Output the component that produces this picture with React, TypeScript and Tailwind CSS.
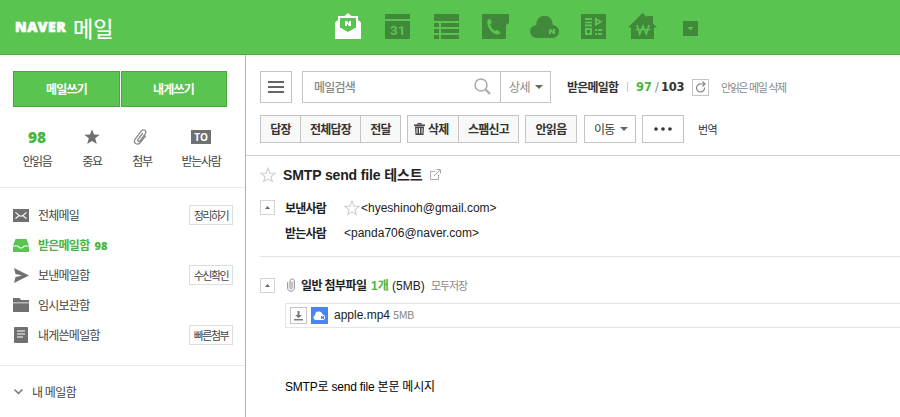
import React from "react";

const KR = "font-['Noto_Sans_CJK_KR',sans-serif]";
const LAT = "font-['Liberation_Sans','Noto_Sans_CJK_KR',sans-serif]";

function HeaderIcons() {
  return (
    <div className="flex items-start fill-[#40893a]">
      <svg width="30" height="30" viewBox="0 0 30 30">
        <path fill="#fff" d="M2 10.500l3-2.500V4h6.500L15 1l3.500 3H25v4l3 2.500V27H2z" />
        <path fill="#5ac451" d="M7 6h16v9.500L15 20l-8-4.500z" />
        <path fill="#fff" d="M12 9h2l2 2.400V9h2v5h-2l-2-2.400V14h-2z" />
      </svg>
      <svg className="ml-5" width="30" height="30" viewBox="0 0 30 30">
        <path d="M2 2h25v5H2zM2 9h25v18H2z" />
        <text x="14.8" y="22.600" textAnchor="middle" fontSize="13.5" fontWeight="700" fill="#5ac451" className="font-['Roboto',sans-serif]">31</text>
      </svg>
      <svg className="ml-[19px]" width="30" height="30" viewBox="0 0 30 30">
        <path d="M2 2h25v7H2zM2 11h5v4H2zM9 11h18v4H9zM2 17h5v4H2zM9 17h18v4H9zM2 23h5v4H2zM9 23h18v4H9z" />
      </svg>
      <svg className="ml-[18px]" width="30" height="30" viewBox="0 0 30 30">
        <path d="M2 2h27v9l-3 2v14H2z" />
        <path fill="#5ac451" d="M7.500 8l2.500-1.200 2 4.200-1.900 1.300c.9 3.200 2.400 5.100 4.900 6.700l2-1.300 3.500 2.800-1.500 1.700c-2.500.8-5.500-.6-8-3.300-3-3.300-4.500-7.500-3.500-10.900z" />
      </svg>
      <svg className="ml-5" width="30" height="30" viewBox="0 0 30 30">
        <circle cx="14.5" cy="12" r="8.200" />
        <rect x="0" y="13" width="29" height="13" rx="6.500" />
        <path fill="#5ac451" d="M19 17h2l2 2.400V17h2v5h-2l-2-2.400V22h-2z" />
      </svg>
      <svg className="ml-[19px]" width="30" height="30" viewBox="0 0 30 30">
        <path d="M2 2h25v25H2z" />
        <path fill="#5ac451" fillRule="evenodd" d="M6 6h7v2H6zM6 9.500h7v1.700H6zM6 12.500h7v2H6zM16 5.500l7.500 4.300-7.500 4.400zM18 8.500v2.700l2.300-1.400zM6 16h7v7H6zm2 2v3h3v-3zM16 17h2v2h-2zM19 17h4v2h-4zM16 21h2v2h-2zM19 21h4v2h-4z" />
      </svg>
      <svg className="ml-[19px]" width="30" height="30" viewBox="0 0 30 30">
        <path d="M0 15.500L14.500 1l4.500 4.500V4h6v7.500l4 4h-3V27H3V15.500z" />
        <path fill="none" stroke="#5ac451" strokeWidth="1.700" d="M9 13l2.700 9L15 14l3.300 8L21 13" />
        <path stroke="#5ac451" strokeWidth="1.200" d="M7.500 17.500h15" />
      </svg>
      <svg className="ml-[25px]" width="15" height="30" viewBox="0 0 15 30">
        <path d="M0 9h15v15H0z" />
        <path fill="#5ac451" d="M4.500 15h6l-3 3.500z" />
      </svg>
    </div>
  );
}

function Paperclip({ className, width, height }: { className: string; width: number; height: number }) {
  return (
    <svg className={className} width={width} height={height} viewBox="0 0 14 16" fill="none" stroke="currentColor" strokeWidth="1.300" strokeLinecap="round">
      <path d="M9.500 4.500L5 10.300c-1 1.500.9 2.800 2 1.500l5.200-7c2-3-1.700-5.300-3.700-2.900L2.300 9.800c-2.700 4 2 7.300 5 3.700L12.500 7" />
    </svg>
  );
}

function StraightClip() {
  return (
    <svg width="8" height="14" viewBox="0 0 8 14" fill="none" stroke="#888" strokeWidth="1">
      <path d="M5 3.500v6.300c0 1.400-2 1.400-2 0V3.200C3 .2 7.300.2 7.300 3.200v7c0 4-6.600 4-6.600 0V4" />
    </svg>
  );
}

function Star({ size }: { size: number }) {
  return (
    <svg width={size} height={size} viewBox="0 0 16 16" fill="none" stroke="#cfcfcf" strokeWidth="1.100">
      <path d="M8 1.200l1.900 4.900 5.200.2-4.100 3.300 1.400 5L8 11.800l-4.400 2.800 1.400-5L.9 6.300l5.200-.2z" />
    </svg>
  );
}

function Toggle() {
  return (
    <div className="flex h-[15px] w-[15px] items-center justify-center border border-[#d2d2d2]">
      <svg width="5" height="3" viewBox="0 0 5 3"><path fill="#666" d="M0 3L2.500 0 5 3z" /></svg>
    </div>
  );
}

function Caret() {
  return <svg width="8" height="4" viewBox="0 0 8 4"><path fill="#666" d="M0 0h8L4 4z" /></svg>;
}

function Shortcut({ width, label, children }: { width: string; label: string; children: React.ReactNode }) {
  return (
    <div className={`flex shrink-0 flex-col items-center ${width}`}>
      <div className="flex h-5 items-center">{children}</div>
      <span className="mt-1 whitespace-nowrap text-xs leading-5 tracking-[-1.3px] text-[#444]">{label}</span>
    </div>
  );
}

function Folder({ icon, label, active, count, action }: { icon: React.ReactNode; label: string; active?: boolean; count?: string; action?: string }) {
  return (
    <div className="flex h-[30px] items-center pl-[13px] pr-3">
      <div className="flex w-[25px] items-center">{icon}</div>
      <span className={`whitespace-nowrap text-xs tracking-[-0.75px] ${active ? "font-bold text-[#4ab540]" : "text-[#444]"}`}>{label}</span>
      {count && <span className="ml-[5px] mt-0.5 font-['Open_Sans',sans-serif] text-[11px] font-extrabold text-[#4ab540]">{count}</span>}
      {action && (
        <div className="ml-auto flex h-5 w-11 items-center justify-center whitespace-nowrap border border-[#ddd] text-[11px] tracking-[-1.5px] text-[#444]">
          <span>{action}</span>
        </div>
      )}
    </div>
  );
}

function Sidebar() {
  return (
    <aside className="h-[362px] w-[246px] shrink-0 border-r border-[#b0b0b0]">
      <div className="flex gap-px pl-[13px] pt-4 text-xs font-bold tracking-[-0.8px] text-white">
        <div className="flex h-9 w-[107px] items-center justify-center border border-[#49a642] bg-[#5ac451]">메일쓰기</div>
        <div className="flex h-9 w-[106px] items-center justify-center border border-[#49a642] bg-[#5ac451] pr-px">내게쓰기</div>
      </div>
      <div className="mt-5 flex h-[61px] border-b border-[#eaeaea] pl-[17px]">
        <Shortcut width="w-10" label="안읽음">
          <span className="font-['Open_Sans',sans-serif] text-[15.500px] font-extrabold text-[#4ab540]">98</span>
        </Shortcut>
        <Shortcut width="w-[70px]" label="중요">
          <svg width="16" height="16" viewBox="0 0 16 16"><path fill="#707070" d="M8 .3l2 5.300 5.700.2-4.500 3.500 1.600 5.700L8 12l-4.800 3 1.600-5.700L.3 5.800 6 5.600z" /></svg>
        </Shortcut>
        <Shortcut width="w-[30px]" label="첨부">
          <Paperclip className="-ml-1 text-[#8a8a8a]" width={14} height={16} />
        </Shortcut>
        <Shortcut width="w-[88px]" label="받는사람">
          <div className="flex h-3.5 w-5 items-center justify-center bg-[#707070] font-['Open_Sans',sans-serif] text-[10px] font-bold leading-none text-white">TO</div>
        </Shortcut>
      </div>
      <nav className="h-[178px] border-b border-[#eaeaea] pt-3">
        <Folder label="전체메일" action="정리하기" icon={
          <svg width="16" height="13" viewBox="0 0 16 13"><path fill="#707070" d="M0 0h16v13H0z" /><path fill="none" stroke="#fff" strokeWidth="1.100" d="M2.500 3.300L6 6.300c1.200 1 2.800 1 4 0l3.500-3M2.500 9.700L5.700 7M13.500 9.700L10.300 7" /></svg>
        } />
        <Folder label="받은메일함" active count="98" icon={
          <svg width="16" height="13" viewBox="0 0 16 13" fill="#5ac451"><path d="M2.500 0h11L16 6.500h-4.500C10 6.500 10 8.500 8 8.500S6 6.500 4.500 6.500H0z" /><path d="M0 7.500h4c1.500 0 1.500 2 4 2s2.500-2 4-2h4V13H0z" /></svg>
        } />
        <Folder label="보낸메일함" action="수신확인" icon={
          <svg width="16" height="15" viewBox="0 0 16 15"><path fill="#707070" d="M1 0l15 7.500L1 15l1.500-6L9 7.500 2.500 6z" /></svg>
        } />
        <Folder label="임시보관함" icon={
          <svg width="16" height="14" viewBox="0 0 16 14" fill="#707070"><path d="M0 0h6.500L8 2h8v2.500H0zM0 5.300h16V14H0z" /></svg>
        } />
        <Folder label="내게쓴메일함" action="빠른첨부" icon={
          <svg className="ml-px" width="14" height="16" viewBox="0 0 14 16"><rect width="14" height="16" rx="1" fill="#707070" /><path stroke="#fff" strokeWidth="1.200" d="M3 4h8M3 7h8M3 10h6" /></svg>
        } />
      </nav>
      <div className="flex h-[52px] items-center pl-3.5 text-xs tracking-[-0.5px] text-[#444]">
        <svg width="9" height="6" viewBox="0 0 9 6" fill="none" stroke="#777" strokeWidth="1.500"><path d="M.5.5l4 4 4-4" /></svg>
        <span className="ml-[9px]">내 메일함</span>
      </div>
    </aside>
  );
}

function Toolbar() {
  return (
    <div className="h-[101px] border-b border-[#d2d2d2] pl-3.5 pt-4">
      <div className="flex h-8 items-center">
        <div className="flex h-8 w-8 items-center justify-center border border-[#c4c4c4]">
          <svg width="16" height="12" viewBox="0 0 16 12" fill="#666"><path d="M0 0h16v2H0zM0 5h16v2H0zM0 10h16v2H0z" /></svg>
        </div>
        <div className="ml-2.5 flex h-8 w-[249px] items-center border border-[#c4c4c4]">
          <span className="ml-[11px] text-xs font-medium tracking-[-0.75px] text-[#888]">메일검색</span>
          <svg className="-mt-0.5 ml-auto mr-[9px]" width="17" height="17" viewBox="0 0 17 17" fill="none" stroke="#aaa"><circle cx="7" cy="7" r="6" strokeWidth="1.500" /><path strokeWidth="2.200" d="M11.300 11.300l4.700 4.700" /></svg>
          <div className="flex h-full w-[50px] items-center border-l border-[#c4c4c4] pl-2 text-xs tracking-[-0.6px] text-[#888]">
            <span className="mr-[5px]">상세</span>
            <Caret />
          </div>
        </div>
        <span className="ml-4 w-[60px] whitespace-nowrap text-xs font-bold tracking-[-0.8px] text-[#333]">받은메일함</span>
        <div className="h-2.5 w-px bg-[#ccc]" />
        <span className="ml-2 flex w-14 whitespace-nowrap font-['DejaVu_Sans',sans-serif] text-[11.500px] font-bold text-[#333]">
          <span className="w-[19px] text-[#4ab540]">97</span>
          <span className="w-1.5 font-normal text-[#888]">/</span>
          <span className="tracking-[-0.2px]">103</span>
        </span>
        <div className="flex h-[17px] w-[17px] items-center justify-center border border-[#c4c4c4]">
          <svg width="10" height="12" viewBox="0 0 10 12" fill="none" stroke="#888" strokeWidth="1.200"><path d="M8.500 6.500A4 4 0 1 1 5 3h4M6.500.5L9 3 6.500 5.500" /></svg>
        </div>
        <span className="ml-3 whitespace-nowrap text-[11px] tracking-[-1.45px] text-[#888] [word-spacing:1px]">안읽은 메일 삭제</span>
      </div>
      <div className="mt-3 flex h-7 items-center text-xs font-bold tracking-[-0.75px] text-[#333]">
        <div className="flex h-7 w-[141px] divide-x divide-[#c4c4c4] border border-[#c4c4c4] bg-[#f8f8f8]">
          <div className="flex w-10 items-center justify-center">답장</div>
          <div className="flex w-[60px] items-center justify-center">전체답장</div>
          <div className="flex w-[39px] items-center justify-center">전달</div>
        </div>
        <div className="ml-1.5 flex h-7 w-28 divide-x divide-[#c4c4c4] border border-[#c4c4c4] bg-[#f8f8f8]">
          <div className="flex w-[51px] items-center pl-1.5">
            <svg width="11" height="12" viewBox="0 0 11 12" fill="#444"><path d="M3.500 0h4v1.500H11V3H0V1.500h3.500zM4.500 1v.5h2V1z" fillRule="evenodd" /><path fillRule="evenodd" d="M1 3.500h9l-.5 8.500h-8zM2.500 5v5.500h1V5zM5 5v5.500h1V5zM7.500 5v5.500h1V5z" /></svg>
            <span className="ml-[3px]">삭제</span>
          </div>
          <div className="flex w-[59px] items-center justify-center">스팸신고</div>
        </div>
        <div className="ml-1.5 flex h-7 w-[52px] items-center justify-center border border-[#c4c4c4] bg-[#f8f8f8]">안읽음</div>
        <div className="ml-[7px] flex h-7 w-[52px] items-center gap-[5px] border border-[#c4c4c4] pl-[9px] font-normal">이동<Caret /></div>
        <div className="ml-1.5 flex h-7 w-[42px] items-center justify-center border border-[#c4c4c4]">
          <svg width="18" height="4" viewBox="0 0 18 4" fill="#333"><circle cx="2" cy="2" r="1.800" /><circle cx="9" cy="2" r="1.800" /><circle cx="16" cy="2" r="1.800" /></svg>
        </div>
        <span className="ml-3.5 text-[11px] font-normal tracking-[-0.6px]">번역</span>
      </div>
    </div>
  );
}

function Message() {
  return (
    <article className={`pl-3.5 text-xs text-[#222] ${LAT}`}>
      <div className="mt-2 flex h-[22px] items-center">
        <Star size={16} />
        <h1 className="ml-[7px] whitespace-nowrap text-sm font-bold tracking-[-0.13px]">SMTP send file 테스트</h1>
        <svg className="-mt-0.5 ml-[7px]" width="11" height="11" viewBox="0 0 11 11" fill="none" stroke="#aaa"><path d="M5 2.500H.5v8h8V6M4 7l6-6M6.500.5h4v4" /></svg>
      </div>
      <div className="mt-[9px] flex h-[25px] items-center">
        <Toggle />
        <span className={`ml-2.5 w-[59px] font-bold tracking-[-0.75px] ${KR}`}>보낸사람</span>
        <Star size={16} />
        <span className="ml-px">&lt;hyeshinoh@gmail.com&gt;</span>
      </div>
      <div className="flex h-[25px] items-center pl-[25px]">
        <span className={`w-[59px] font-bold tracking-[-0.75px] ${KR}`}>받는사람</span>
        <span>&lt;panda706@naver.com&gt;</span>
      </div>
      <div className="mt-[11px] h-px bg-[#e5e5e5]" />
      <div className="mt-[18px] flex h-5 items-center whitespace-nowrap">
        <Toggle />
        <div className="ml-3"><StraightClip /></div>
        <span className="ml-1.5 mt-0.5 w-[70px] font-bold tracking-[-0.6px]">일반 첨부파일</span>
        <span className="mt-0.5 w-[21px] font-bold text-[#4ab540]">1개</span>
        <span className="mt-0.5 w-[39px]">(5MB)</span>
        <span className="mt-0.5 text-[11px] tracking-[-1.1px] text-[#888]">모두저장</span>
      </div>
      <div className="ml-[25px] mt-2 flex h-[25px] items-center border-y border-l border-[#e5e5e5] pl-1">
        <div className="flex h-[17px] w-[17px] items-center justify-center border border-[#c4c4c4]">
          <svg width="9" height="10" viewBox="0 0 9 10" fill="#777"><path d="M3.500 0h2v4h2.300L4.500 7.300 1.200 4h2.300zM0 8h9v1.500H0z" /></svg>
        </div>
        <div className="ml-1 flex h-[17px] w-[17px] items-center justify-center bg-[#4a84f0]">
          <svg width="13" height="9" viewBox="0 0 13 9"><path fill="#fff" d="M2.500 9A2.500 2.500 0 0 1 2 4.200a3.800 3.800 0 0 1 7.500-.7A2.800 2.800 0 0 1 10.200 9z" /><path fill="#4a84f0" d="M8 5h1l1 1V5h1v3h-1L9 7v1H8z" /></svg>
        </div>
        <span className="-mt-0.5 ml-1.5">apple.mp4</span>
        <span className={`-mt-0.5 ml-[3px] text-[11px] tracking-[-0.5px] text-[#888] ${KR}`}>5MB</span>
      </div>
      <p className="ml-[25px] mt-[49px] leading-5 tracking-[-0.2px] text-black">SMTP로 send file 본문 메시지</p>
    </article>
  );
}

export default function App() {
  return (
    <div className={`h-[417px] w-[900px] overflow-hidden bg-white leading-4 ${KR}`}>
      <header className="flex h-[55px] border-b border-[#4ca944] bg-[#5ac451] text-white">
        <div className="flex w-[333px] items-center pl-[15px]">
          <span className="w-[58px] font-['Open_Sans',sans-serif] text-[14px] font-extrabold tracking-[0.5px] [-webkit-text-stroke:0.6px_white]">NAVER</span>
          <span className="text-[22px] leading-8 [-webkit-text-stroke:0.2px_white]">메일</span>
        </div>
        <div className="pt-3"><HeaderIcons /></div>
      </header>
      <div className="flex">
        <Sidebar />
        <main className="min-w-0 flex-1">
          <Toolbar />
          <Message />
        </main>
      </div>
    </div>
  );
}
